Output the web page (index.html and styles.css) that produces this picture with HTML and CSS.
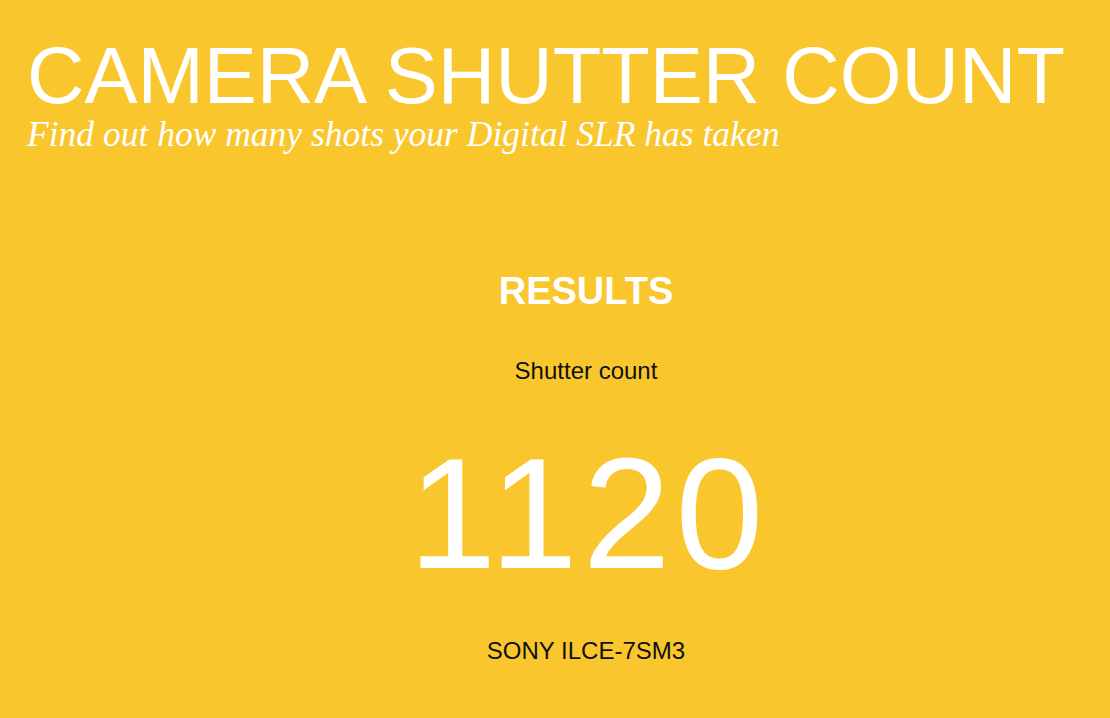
FILE: index.html
```html
<!doctype html>
<html lang="en">
<head>
    <meta charset="UTF-8">
    <meta name="viewport" content="width=device-width, initial-scale=1.0">
    <title>Camera Shutter Count</title>
    <link rel="stylesheet" href="styles.css">
</head>
<body>

<header class="header">
    <h1 class="title">CAMERA SHUTTER COUNT</h1>
    <p class="subtitle">Find out how many shots your Digital SLR has taken</p>
</header>

<main class="results">
    <h2 class="results-title">RESULTS</h2>
    <div class="results-label">Shutter count</div>
    <div class="results-count">1120</div>
    <div class="results-model">SONY ILCE-7SM3</div>
</main>

</body>
</html>
```

FILE: styles.css
```css
body {
    margin: 0;
    background: #fac62d;
    font-family: "Liberation Sans", Arial, sans-serif;
    color: #111;
}

.header {
    padding: 36px 0 0 27px;
}

.title {
    margin: 0;
    font-size: 79.5px;
    line-height: 80px;
    font-weight: normal;
    color: #fff;
    white-space: nowrap;
}

.subtitle {
    margin: 0;
    font-family: "Liberation Serif", Georgia, serif;
    font-style: italic;
    font-size: 35.5px;
    line-height: 36px;
    color: #fff;
}

.results {
    display: flex;
    flex-direction: column;
    align-items: center;
    padding: 120px 0 0 62px;
}

.results-title {
    margin: 0;
    font-size: 38px;
    line-height: 38px;
    color: #fff;
}

.results-label {
    margin-top: 49px;
    font-size: 24px;
    line-height: 24px;
}

.results-count {
    margin-top: 51px;
    margin-left: 5px;
    font-size: 158px;
    line-height: 158px;
    letter-spacing: 5px;
    color: #fff;
}

.results-model {
    margin-top: 47px;
    font-size: 24px;
    line-height: 24px;
}
```
